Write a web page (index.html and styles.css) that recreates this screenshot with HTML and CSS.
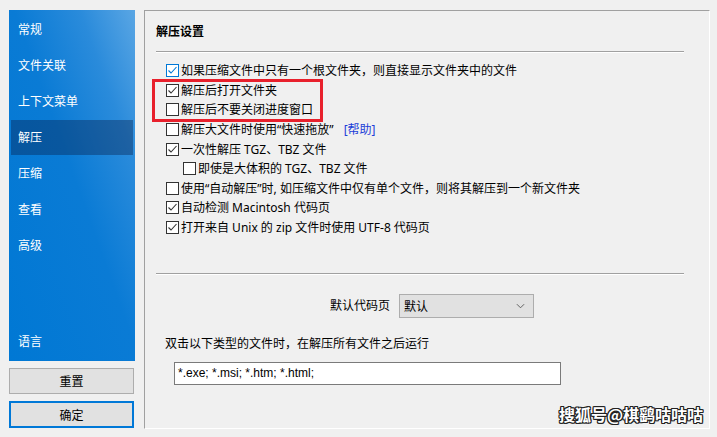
FILE: index.html
```html
<!DOCTYPE html>
<html lang="zh-CN">
<head>
  <meta charset="UTF-8" />
  <title>解压设置</title>
  <link rel="stylesheet" href="styles.css">
</head>
<body>
  <div class="app">
    <div class="side">
      <nav class="nav">
        <div class="nav-item">常规</div>
        <div class="nav-item">文件关联</div>
        <div class="nav-item">上下文菜单</div>
        <div class="nav-item active">解压</div>
        <div class="nav-item">压缩</div>
        <div class="nav-item">查看</div>
        <div class="nav-item">高级</div>
        <div class="nav-item lang">语言</div>
      </nav>
      <button class="btn">重置</button>
      <button class="btn primary">确定</button>
    </div>

    <section class="panel">
      <h2 class="title">解压设置</h2>
      <div class="sep"></div>

      <div class="opts">
        <label class="opt hover"><span class="box"><svg viewBox="0 0 11 11"><polyline points="1.5,5.5 4,8 9.5,2"/></svg></span>如果压缩文件中只有一个根文件夹，则直接显示文件夹中的文件</label>
        <div class="mark">
          <label class="opt"><span class="box"><svg viewBox="0 0 11 11"><polyline points="1.5,5.5 4,8 9.5,2"/></svg></span>解压后打开文件夹</label>
          <label class="opt"><span class="box"></span>解压后不要关闭进度窗口</label>
        </div>
        <label class="opt"><span class="box"></span>解压大文件时使用“快速拖放”<a class="help">[帮助]</a></label>
        <label class="opt"><span class="box"><svg viewBox="0 0 11 11"><polyline points="1.5,5.5 4,8 9.5,2"/></svg></span>一次性解压 TGZ、TBZ 文件</label>
        <label class="opt sub"><span class="box"></span>即使是大体积的 TGZ、TBZ 文件</label>
        <label class="opt"><span class="box"></span>使用“自动解压”时, 如压缩文件中仅有单个文件，则将其解压到一个新文件夹</label>
        <label class="opt"><span class="box"><svg viewBox="0 0 11 11"><polyline points="1.5,5.5 4,8 9.5,2"/></svg></span>自动检测 Macintosh 代码页</label>
        <label class="opt"><span class="box"><svg viewBox="0 0 11 11"><polyline points="1.5,5.5 4,8 9.5,2"/></svg></span>打开来自 Unix 的 zip 文件时使用 UTF-8 代码页</label>
      </div>

      <div class="sep lower"></div>

      <div class="codepage">
        <span class="label">默认代码页</span>
        <div class="select">
          <span>默认</span>
          <svg class="chev" viewBox="0 0 10 6"><polyline points="1,1 5,5 9,1"/></svg>
        </div>
      </div>

      <p class="run-note">双击以下类型的文件时，在解压所有文件之后运行</p>
      <div class="input">*.exe; *.msi; *.htm; *.html;</div>
    </section>
  </div>

  <div class="watermark">搜狐号@棋鹞咕咕咕</div>
</body>
</html>
```

FILE: styles.css
```css
body {
  margin: 0;
  background: #f0f0f0;
  font-family: "Noto Sans", "Noto Sans CJK SC", sans-serif;
  font-size: 12px;
  color: #000;
  width: 717px;
  height: 437px;
  overflow: hidden;
  position: relative;
}
.app {
  display: flex;
  gap: 9px;
  padding: 10px 7px 8px 9px;
  height: 437px;
  box-sizing: border-box;
}
.side {
  width: 126px;
  display: flex;
  flex-direction: column;
}
.nav {
  height: 351px;
  box-sizing: border-box;
  padding: 2px 2px 1px;
  display: flex;
  flex-direction: column;
  background: linear-gradient(to bottom left, #5aa6e4 0%, #2a8bdb 22%, #0a7bd5 48%, #0078d4 100%);
}
.nav-item {
  height: 36px;
  line-height: 35px;
  padding-left: 7px;
  color: #fff;
  font-size: 12px;
}
.nav-item.active {
  height: 35px;
  margin-bottom: 1px;
  background: rgba(8, 30, 70, 0.38);
}
.nav-item.lang {
  margin-top: auto;
}
.btn {
  font-family: inherit;
  font-size: 12px;
  color: #000;
  background: #e1e1e1;
  border: 1px solid #adadad;
  height: 26px;
  margin-top: 7px;
  padding: 0;
  width: 125px;
}
.btn.primary {
  border: 2px solid #0078d7;
  height: 27px;
}
.panel {
  flex: 1;
  border-top: 1px solid #a0a0a0;
  border-left: 1px solid #a0a0a0;
  border-right: 1px solid #fff;
  border-bottom: 1px solid #fff;
  padding: 0 25px 0 11px;
  display: flex;
  flex-direction: column;
}
.title {
  margin: 11px 0 0;
  font-size: 12px;
  font-weight: 600;
  line-height: 20px;
}
.sep {
  margin-top: 9px;
  border-top: 1px solid #a0a0a0;
  border-bottom: 1px solid #fff;
}
.sep.lower {
  margin-top: 36px;
}
.opts {
  margin-top: 8px;
  padding-left: 10px;
}
.opt {
  display: flex;
  align-items: center;
  height: 19.6px;
  line-height: 19px;
  white-space: nowrap;
}
.opt.sub {
  padding-left: 17px;
}
.box {
  width: 13px;
  height: 13px;
  box-sizing: border-box;
  border: 1px solid #333;
  background: #fff;
  margin-right: 2px;
  flex: none;
  display: flex;
  align-items: center;
  justify-content: center;
}
.box svg {
  width: 11px;
  height: 11px;
  fill: none;
  stroke: #333;
  stroke-width: 1.1;
}
.hover .box {
  border-color: #0078d7;
}
.hover .box svg {
  stroke: #0078d7;
}
.help {
  color: #1d3fd8;
  margin-left: 10px;
}
.mark {
  position: relative;
}
.mark::after {
  content: "";
  position: absolute;
  left: -14px;
  top: -2px;
  width: 171px;
  height: 43px;
  box-sizing: border-box;
  border: 3px solid #e8202c;
}
.codepage {
  display: flex;
  align-items: center;
  gap: 9px;
  margin-top: 19px;
  padding-left: 174px;
}
.label {
  line-height: 20px;
}
.select {
  width: 135px;
  height: 24px;
  box-sizing: border-box;
  border: 1px solid #adadad;
  background: #e1e1e1;
  display: flex;
  align-items: center;
  justify-content: space-between;
  padding: 0 8px 0 4px;
}
.chev {
  width: 9px;
  height: 6px;
  fill: none;
  stroke: #555;
  stroke-width: 1;
}
.run-note {
  margin: 16px 0 0 9px;
  line-height: 20px;
}
.input {
  margin: 8px 0 0 18px;
  width: 387px;
  height: 23px;
  box-sizing: border-box;
  border: 1px solid #7a7a7a;
  background: #fff;
  padding-left: 3px;
  line-height: 21px;
  font-family: "Liberation Sans", Arial, sans-serif;
  font-size: 12px;
}
.watermark {
  position: absolute;
  right: 14px;
  bottom: 11px;
  font-size: 16px;
  font-weight: bold;
  color: #fff;
  font-family: "Noto Sans CJK SC", sans-serif;
  text-shadow: 1px 1px 0 #222, -1px -1px 0 #222, 1px -1px 0 #222, -1px 1px 0 #222, 0 1px 0 #222, 0 -1px 0 #222, 1px 0 0 #222, -1px 0 0 #222;
}
```
